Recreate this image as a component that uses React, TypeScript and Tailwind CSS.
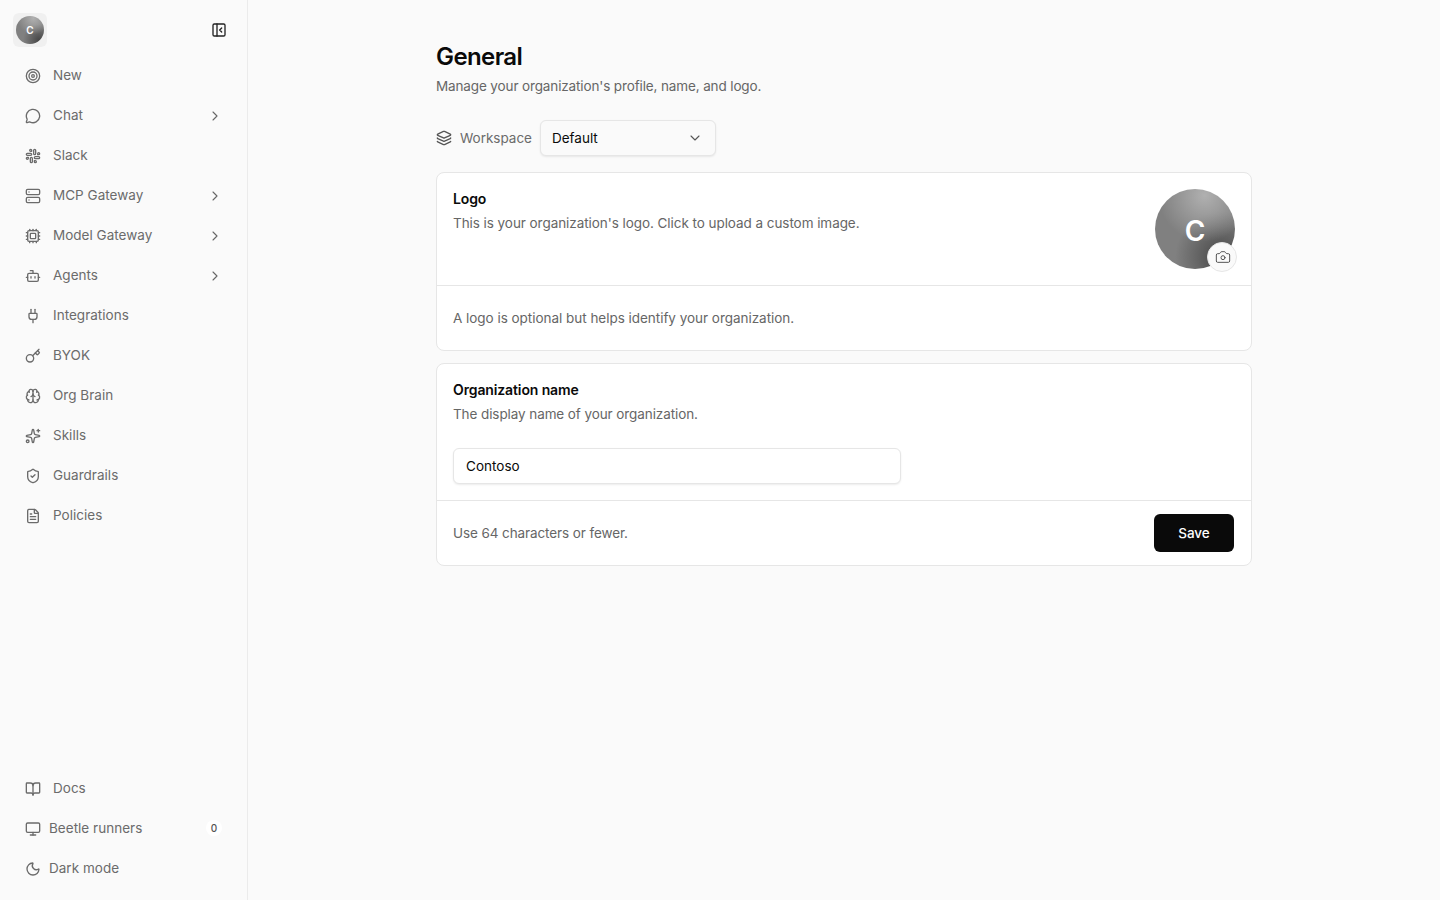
import {
  BookOpen,
  Bot,
  Brain,
  Camera,
  ChevronDown,
  ChevronRight,
  Cpu,
  FileText,
  Key,
  Layers,
  MessageCircle,
  Monitor,
  Moon,
  PanelLeftClose,
  Plug,
  Server,
  ShieldCheck,
  Slack,
  Sparkles,
  Target,
  type LucideIcon,
} from "lucide-react";

type NavItem = {
  label: string;
  icon: LucideIcon;
  more?: boolean;
};

const NAV: NavItem[] = [
  { label: "New", icon: Target },
  { label: "Chat", icon: MessageCircle, more: true },
  { label: "Slack", icon: Slack },
  { label: "MCP Gateway", icon: Server, more: true },
  { label: "Model Gateway", icon: Cpu, more: true },
  { label: "Agents", icon: Bot, more: true },
  { label: "Integrations", icon: Plug },
  { label: "BYOK", icon: Key },
  { label: "Org Brain", icon: Brain },
  { label: "Skills", icon: Sparkles },
  { label: "Guardrails", icon: ShieldCheck },
  { label: "Policies", icon: FileText },
];

const avatarBg =
  "bg-[radial-gradient(circle_at_62%_8%,#b0b0b0_0%,transparent_52%),radial-gradient(circle_at_82%_85%,#484848_0%,transparent_48%),linear-gradient(#808080,#808080)]";

function NavRow({ item }: { item: NavItem }) {
  const Icon = item.icon;
  return (
    <div className="flex h-10 items-center gap-3 pl-[25px] pr-6 text-[13.5px] text-[#6b6b6b]">
      <Icon className="h-4 w-4 shrink-0" />
      <span className="mb-[2px] flex-1">{item.label}</span>
      {item.more && <ChevronRight className="h-4 w-4 text-[#666666]" strokeWidth={1.6} />}
    </div>
  );
}

function Sidebar() {
  return (
    <aside className="flex h-full w-[248px] shrink-0 flex-col justify-between border-r border-[#ebebeb] bg-[#fafafa] pb-[11px] tracking-[0.02px]">
      <div>
        <div className="flex items-center justify-between pl-[13px] pr-5 pt-[13px] pb-[9px]">
          <div className="flex h-[34px] w-[34px] items-center justify-center rounded-md bg-[#f0f0f0]">
            <div className={`flex h-7 w-7 items-center justify-center rounded-full text-[10px] font-semibold text-white ${avatarBg}`}>
              C
            </div>
          </div>
          <PanelLeftClose className="h-4 w-4 text-[#222222]" />
        </div>
        <nav>
          {NAV.map((item) => (
            <NavRow key={item.label} item={item} />
          ))}
        </nav>
      </div>

      <div className="text-[13.5px] text-[#6b6b6b]">
        <div className="flex h-10 items-center gap-3 pl-[25px]">
          <BookOpen className="h-4 w-4" />
          <span className="mb-[2px]">Docs</span>
        </div>
        <div className="flex h-10 items-center gap-2 pl-[25px] pr-[25px]">
          <Monitor className="h-4 w-4" />
          <span className="mb-[2px] flex-1">Beetle runners</span>
          <span className="mb-[2px] flex h-4 w-4 items-center justify-center rounded-full bg-white text-[10px] font-medium text-[#555555]">
            0
          </span>
        </div>
        <div className="flex h-10 items-center gap-2 pl-[25px]">
          <Moon className="h-4 w-4" />
          <span className="mb-[2px]">Dark mode</span>
        </div>
      </div>
    </aside>
  );
}

function LogoCard() {
  return (
    <section className="rounded-lg border border-[#e6e6e6] bg-white">
      <div className="flex items-start justify-between border-b border-[#e6e6e6] p-4">
        <div>
          <h2 className="text-sm font-semibold leading-5 tracking-[-0.12px] text-[#0a0a0a]">Logo</h2>
          <p className="mt-1 text-[13.5px] leading-5 tracking-[-0.06px] text-[#666666]">
            This is your organization's logo. Click to upload a custom image.
          </p>
        </div>
        <div className="relative">
          <div className={`flex h-20 w-20 items-center justify-center rounded-full pt-1 text-[28px] font-semibold text-white ${avatarBg}`}>
            C
          </div>
          <div className="absolute -bottom-[3px] -right-[2px] flex h-[30px] w-[30px] items-center justify-center rounded-full border border-[#e6e6e6] bg-[#fafafa] pl-px">
            <Camera className="h-4 w-4 text-[#555555]" strokeWidth={1.5} />
          </div>
        </div>
      </div>
      <div className="px-4 py-[22px] text-[13.5px] leading-5 tracking-[-0.03px] text-[#666666]">
        A logo is optional but helps identify your organization.
      </div>
    </section>
  );
}

function NameCard() {
  return (
    <section className="rounded-lg border border-[#e6e6e6] bg-white">
      <div className="border-b border-[#e6e6e6] p-4">
        <h2 className="text-sm font-semibold leading-5 tracking-[-0.12px] text-[#0a0a0a]">Organization name</h2>
        <p className="mt-1 text-[13.5px] leading-5 tracking-[-0.09px] text-[#666666]">The display name of your organization.</p>
        <input
          readOnly
          value="Contoso"
          className="mt-6 block h-9 w-[448px] rounded-md border border-[#e6e6e6] bg-white px-3 text-[13.5px] tracking-[0.02px] text-[#0a0a0a] shadow-[0_1px_2px_rgba(0,0,0,0.08)] outline-none"
        />
      </div>
      <div className="flex items-center justify-between py-[13px] pl-4 pr-[17px]">
        <span className="text-[13.5px] tracking-[-0.1px] text-[#666666]">Use 64 characters or fewer.</span>
        <button className="h-[38px] w-20 rounded-md bg-[#0a0a0a] text-[13.5px] font-medium text-white">Save</button>
      </div>
    </section>
  );
}

export default function App() {
  return (
    <div className="flex h-screen bg-[#fafafa] font-['Inter',sans-serif]">
      <Sidebar />
      <main className="flex-1">
        <div className="mx-auto w-[816px] pt-[41px]">
          <h1 className="text-2xl font-semibold leading-8 tracking-tight text-[#0a0a0a]">General</h1>
          <p className="mt-[3px] text-[13.5px] leading-5 tracking-[-0.13px] text-[#666666]">
            Manage your organization's profile, name, and logo.
          </p>

          <div className="mt-6 flex items-center">
            <Layers className="h-4 w-4 text-[#555555]" />
            <span className="ml-2 text-[13.5px] tracking-[-0.02px] text-[#6b6b6b]">Workspace</span>
            <div className="ml-2 flex h-9 w-[176px] items-center justify-between rounded-md border border-[#e6e6e6] bg-[#fafafa] pl-[11px] pr-3 text-[13.5px] text-[#0a0a0a] shadow-[0_1px_2px_rgba(0,0,0,0.08)]">
              <span>Default</span>
              <ChevronDown className="h-4 w-4 text-[#555555]" strokeWidth={1.6} />
            </div>
          </div>

          <div className="mt-4 flex flex-col gap-3">
            <LogoCard />
            <NameCard />
          </div>
        </div>
      </main>
    </div>
  );
}
